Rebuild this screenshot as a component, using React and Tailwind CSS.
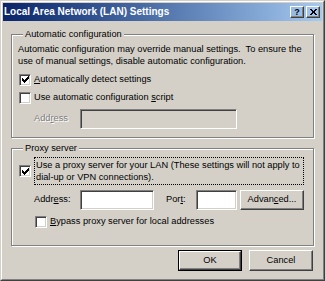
import React from 'react';

const FONT = { fontFamily: '"Liberation Sans", Arial, sans-serif' };

const Check = ({ checked }) => (
    <div className="w-[12px] h-[12px] shrink-0 border border-t-[#808080] border-l-[#808080] border-b-white border-r-white">
        <div className="w-full h-full bg-white shadow-[inset_1px_1px_0_#404040,inset_-1px_-1px_0_#d4d0c8] flex items-center justify-center">
            {checked && (
                <svg width="7" height="7" viewBox="0 0 7 7" shapeRendering="crispEdges">
                    <path d="M0 2 L2 4 L7 -1 L7 2 L2 7 L0 5 Z" fill="#000" />
                </svg>
            )}
        </div>
    </div>
);

const Field = ({ className = '', disabled }) => (
    <div className={`h-[20px] border border-t-[#808080] border-l-[#808080] border-b-white border-r-white ${className}`}>
        <div className={`w-full h-full shadow-[inset_1px_1px_0_#404040,inset_-1px_-1px_0_#d4d0c8] ${disabled ? 'bg-[#d4d0c8]' : 'bg-white'}`} />
    </div>
);

const Button = ({ children, isDefault, className = '' }) => {
    const inner = (
        <div className="w-full h-full flex items-center justify-center border border-t-white border-l-white border-b-[#404040] border-r-[#404040] shadow-[inset_-1px_-1px_0_#808080]">
            {children}
        </div>
    );
    return isDefault ? (
        <div className={`border border-black ${className}`}>{inner}</div>
    ) : (
        <div className={className}>{inner}</div>
    );
};

const Group = ({ title, className = '', children }) => (
    <fieldset className={`border border-[#808080] shadow-[1px_1px_0_#fff,inset_1px_1px_0_#fff] ${className}`}>
        <legend className="ml-[5px] px-[2px] bg-[#d4d0c8] leading-[12px]">{title}</legend>
        {children}
    </fieldset>
);

export default function App() {
    return (
        <div
            style={FONT}
            className="w-[325px] h-[281px] bg-[#d4d0c8] text-[9.25px] text-black border border-t-[#d4d0c8] border-l-[#d4d0c8] border-b-[#404040] border-r-[#404040]"
        >
            <div className="h-full border border-t-white border-l-white border-b-[#808080] border-r-[#808080] p-[1px] flex flex-col">
                {/* Title bar */}
                <div className="h-[18px] shrink-0 bg-gradient-to-r from-[#0a246a] to-[#a6caf0] flex items-center pl-[1px] pr-[2px]">
                    <span className="text-white font-bold text-[10px] leading-none">Local Area Network (LAN) Settings</span>
                    <div className="ml-auto flex gap-[2px]">
                        <Button className="w-[14px] h-[12px]">
                            <span className="font-bold text-[9px] leading-none">?</span>
                        </Button>
                        <Button className="w-[14px] h-[12px]">
                            <svg width="7" height="6" viewBox="0 0 7 6" shapeRendering="crispEdges">
                                <path d="M0 0h2v1h1v1h1V1h1V0h2v1H6v1H5v2h1v1h1v1H5V5H4V4H3v1H2v1H0V5h1V4h1V2H1V1H0z" fill="#000" />
                            </svg>
                        </Button>
                    </div>
                </div>

                {/* Client area */}
                <div className="flex-1 pl-[8px] pr-[8px] pt-[7px]">
                    <Group title="Automatic configuration" className="h-[110px] pl-[6px] pr-[6px]">
                        <div className="leading-[12px] mt-[3px]">
                            Automatic configuration may override manual settings.&nbsp; To ensure the use of manual settings, disable automatic configuration.
                        </div>
                        <div className="flex items-center gap-[3px] mt-[6px] pl-[1px]">
                            <Check checked />
                            <span><u>A</u>utomatically detect settings</span>
                        </div>
                        <div className="flex items-center gap-[3px] mt-[4px] pl-[1px]">
                            <Check />
                            <span>Use automatic configuration <u>s</u>cript</span>
                        </div>
                        <div className="flex items-center mt-[4px] pl-[16px]">
                            <span className="w-[46px] text-[#808080] [text-shadow:1px_1px_0_#fff]">Add<u>r</u>ess</span>
                            <Field disabled className="w-[157px]" />
                        </div>
                    </Group>

                    <Group title="Proxy server" className="h-[104px] mt-[4px] pl-[6px] pr-[6px]">
                        <div className="flex items-center mt-[3px] pl-[1px]">
                            <Check checked />
                            <div className="ml-[3px] border border-dotted border-black px-[1px] py-[1px] leading-[12px] w-[270px]">
                                Use a proxy server for your LAN (These settings will not apply to dial-up or VPN connections).
                            </div>
                        </div>
                        <div className="flex items-center mt-[5px] pl-[16px]">
                            <span className="w-[46px]">Addr<u>e</u>ss:</span>
                            <Field className="w-[74px]" />
                            <span className="ml-[12px] w-[30px]">Por<u>t</u>:</span>
                            <Field className="w-[41px]" />
                            <Button className="ml-[3px] w-[64px] h-[20px]">Advan<u>c</u>ed...</Button>
                        </div>
                        <div className="flex items-center gap-[3px] mt-[5px] pl-[17px]">
                            <Check />
                            <span><u>B</u>ypass proxy server for local addresses</span>
                        </div>
                    </Group>

                    <div className="flex justify-end gap-[7px] mt-[4px] pr-[1px]">
                        <Button isDefault className="w-[64px] h-[21px]">OK</Button>
                        <Button className="w-[64px] h-[21px]">Cancel</Button>
                    </div>
                </div>
            </div>
        </div>
    );
}
